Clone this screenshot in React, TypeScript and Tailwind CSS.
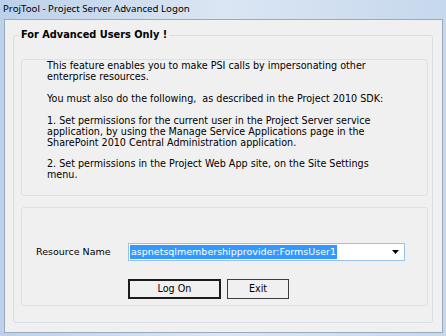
const uiFont = { fontFamily: '"DejaVu Sans", Verdana, sans-serif' }
const titleFont = { fontFamily: '"Noto Sans", "Open Sans", sans-serif' }

// 드롭다운 화살표
function ComboArrow() {
  return (
    <svg width="7" height="4" viewBox="0 0 7 4" className="block">
      <path d="M0 0H7L3.5 4Z" fill="#000" />
    </svg>
  )
}

function WinButton({ label, isDefault }: { label: string; isDefault?: boolean }) {
  return (
    <button
      className={`h-[20px] bg-[#f0f0f0] text-[9.6px] text-black ${
        isDefault ? "w-[93px] border-2 border-[#1c1c1c]" : "w-[62px] border border-[#3c3c3c]"
      }`}
    >
      {label}
    </button>
  )
}

export default function App() {
  return (
    <div className="w-[446px] h-[336px] flex flex-col bg-gradient-to-r from-[#bcd1ea] via-[#dbe6f3] to-[#c6d8ed]">
      {/* 타이틀 바 */}
      <div className="h-[19px] pl-[3px] flex items-center text-[9.7px] text-black" style={titleFont}>
        ProjTool - Project Server Advanced Logon
      </div>

      {/* 클라이언트 영역 */}
      <div
        className="ml-[4px] mr-[3px] h-[314px] bg-[#f0f0f0] border border-[#9aa9bb] pt-[9px] pl-[8px] pr-[9px] pb-[9px] flex"
        style={uiFont}
      >
        <fieldset className="flex-1 border border-[#d5dfe5] rounded-[3px] pl-[7px] pr-[4px] pb-[16px] flex flex-col">
          <legend className="-ml-[2px] px-[2px] text-[9.8px] font-bold text-black leading-[12px]">
            For Advanced Users Only !
          </legend>

          <div className="mt-[18px] border border-[#dbe2e7] rounded-[3px] h-[137px] pl-[25px] text-[9.6px] leading-[11px] text-black">
            <p>This feature enables you to make PSI calls by impersonating other</p>
            <p>enterprise resources.</p>
            <p className="mt-[11px]">You must also do the following,&nbsp; as described in the Project 2010 SDK:</p>
            <p className="mt-[11px]">1. Set permissions for the current user in the Project Server service</p>
            <p>application, by using the Manage Service Applications page in the</p>
            <p>SharePoint 2010 Central Administration application.</p>
            <p className="mt-[10px]">2. Set permissions in the Project Web App site, on the Site Settings</p>
            <p>menu.</p>
          </div>

          <div className="mt-[11px] border border-[#dbe2e7] rounded-[3px] h-[99px] pt-[35px] pl-[14px]">
            <div className="flex items-center">
              <span className="w-[92px] text-[9.5px] text-black">Resource Name</span>
              <div className="w-[277px] h-[18px] border border-[#9cc1e6] bg-white p-[1px] flex items-center">
                <span className="h-[14px] px-[1px] bg-[#3399ff] text-white text-[9.5px] leading-[14px]">
                  aspnetsqlmembershipprovider:FormsUser1
                </span>
                <span className="ml-auto mr-[4px]">
                  <ComboArrow />
                </span>
              </div>
            </div>
            <div className="mt-[18px] ml-[92px] flex gap-[6px]">
              <WinButton label="Log On" isDefault />
              <WinButton label="Exit" />
            </div>
          </div>
        </fieldset>
      </div>
    </div>
  )
}
